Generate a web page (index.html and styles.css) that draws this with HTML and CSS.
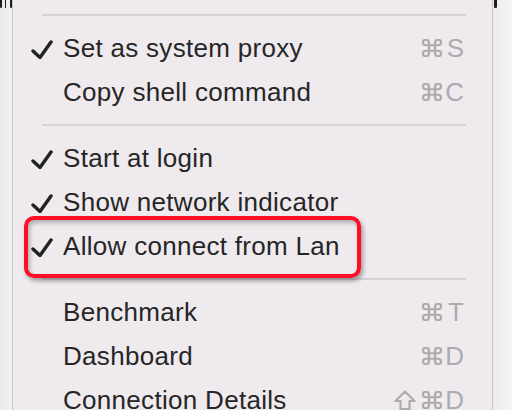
FILE: index.html
```html
<!DOCTYPE html>
<html lang="en">
<head>
<meta charset="utf-8">
<title>Menu</title>
<link rel="stylesheet" href="styles.css">
</head>
<body>
<div class="screen">
  <div class="side side-left"><div class="frag"><span class="bar b1"></span><span class="bar b2"></span><span class="bar b3"></span></div></div>
  <div class="menu">
    <div class="sep"></div>
    <div class="item">
      <span class="check"><svg width="22" height="20" viewBox="0 0 22 20"><path d="M2 12 L9 18.5 L20 3" fill="none" stroke="#222" stroke-width="3.4" stroke-linecap="round" stroke-linejoin="round"/></svg></span>
      <span class="label">Set as system proxy</span>
      <span class="keys"><svg class="cmd" width="20" height="18" viewBox="2.2 2.2 19.6 19.6" preserveAspectRatio="none"><path d="M15 6v12a3 3 0 1 0 3-3H6a3 3 0 1 0 3 3V6a3 3 0 1 0-3 3h12a3 3 0 1 0-3-3z" fill="none" stroke="#aeaaae" stroke-width="2.3"/></svg><span class="key">S</span></span>
    </div>
    <div class="item">
      <span class="check"></span>
      <span class="label">Copy shell command</span>
      <span class="keys"><svg class="cmd" width="20" height="18" viewBox="2.2 2.2 19.6 19.6" preserveAspectRatio="none"><path d="M15 6v12a3 3 0 1 0 3-3H6a3 3 0 1 0 3 3V6a3 3 0 1 0-3 3h12a3 3 0 1 0-3-3z" fill="none" stroke="#aeaaae" stroke-width="2.3"/></svg><span class="key">C</span></span>
    </div>
    <div class="sep"></div>
    <div class="item">
      <span class="check"><svg width="22" height="20" viewBox="0 0 22 20"><path d="M2 12 L9 18.5 L20 3" fill="none" stroke="#222" stroke-width="3.4" stroke-linecap="round" stroke-linejoin="round"/></svg></span>
      <span class="label">Start at login</span>
    </div>
    <div class="item">
      <span class="check"><svg width="22" height="20" viewBox="0 0 22 20"><path d="M2 12 L9 18.5 L20 3" fill="none" stroke="#222" stroke-width="3.4" stroke-linecap="round" stroke-linejoin="round"/></svg></span>
      <span class="label">Show network indicator</span>
    </div>
    <div class="item highlighted">
      <span class="check"><svg width="22" height="20" viewBox="0 0 22 20"><path d="M2 12 L9 18.5 L20 3" fill="none" stroke="#222" stroke-width="3.4" stroke-linecap="round" stroke-linejoin="round"/></svg></span>
      <span class="label">Allow connect from Lan</span>
      <span class="callout"></span>
    </div>
    <div class="sep"></div>
    <div class="item">
      <span class="check"></span>
      <span class="label">Benchmark</span>
      <span class="keys"><svg class="cmd" width="20" height="18" viewBox="2.2 2.2 19.6 19.6" preserveAspectRatio="none"><path d="M15 6v12a3 3 0 1 0 3-3H6a3 3 0 1 0 3 3V6a3 3 0 1 0-3 3h12a3 3 0 1 0-3-3z" fill="none" stroke="#aeaaae" stroke-width="2.3"/></svg><span class="key">T</span></span>
    </div>
    <div class="item">
      <span class="check"></span>
      <span class="label">Dashboard</span>
      <span class="keys"><svg class="cmd" width="20" height="18" viewBox="2.2 2.2 19.6 19.6" preserveAspectRatio="none"><path d="M15 6v12a3 3 0 1 0 3-3H6a3 3 0 1 0 3 3V6a3 3 0 1 0-3 3h12a3 3 0 1 0-3-3z" fill="none" stroke="#aeaaae" stroke-width="2.3"/></svg><span class="key">D</span></span>
    </div>
    <div class="item">
      <span class="check"></span>
      <span class="label">Connection Details</span>
      <span class="keys"><svg class="shift" width="22" height="20" viewBox="0 0 22 20"><path d="M11 1.5 L20.5 11 H15.5 V19 H6.5 V11 H1.5 Z" fill="none" stroke="#aeaaae" stroke-width="2.2" stroke-linejoin="round"/></svg><svg class="cmd" width="20" height="18" viewBox="2.2 2.2 19.6 19.6" preserveAspectRatio="none"><path d="M15 6v12a3 3 0 1 0 3-3H6a3 3 0 1 0 3 3V6a3 3 0 1 0-3 3h12a3 3 0 1 0-3-3z" fill="none" stroke="#aeaaae" stroke-width="2.3"/></svg><span class="key">D</span></span>
    </div>
  </div>
  <div class="side side-right"><div class="frag"><span class="bar b4"></span></div></div>
</div>
</body>
</html>
```

FILE: styles.css
```css
html, body {
  margin: 0;
  padding: 0;
}

body {
  width: 512px;
  height: 410px;
  overflow: hidden;
  background: #f2f2f2;
  font-family: "Liberation Sans", Arial, sans-serif;
}

.screen {
  display: flex;
  height: 410px;
  overflow: hidden;
}

.side {
  flex: none;
}

.side-left {
  width: 12px;
  background: linear-gradient(to right, #e9e9e9, #f3f3f3);
  overflow: hidden;
}

.side-right {
  flex: 1;
  background: linear-gradient(to right, #ececec, #f5f5f5);
  overflow: hidden;
}

.frag {
  height: 8px;
  display: flex;
  align-items: stretch;
}

.bar {
  display: block;
  width: 2px;
  background: #1e1e1e;
  border-radius: 0 0 1px 1px;
}

.b1 { margin-left: 0; }
.b2 { margin-left: 3px; }
.b3 { margin-left: 4px; }
.b4 { margin-left: 1px; width: 3px; }

.menu {
  flex: none;
  width: 479px;
  border-left: 1px solid #c6c3c6;
  border-right: 1px solid #c9c6c9;
  background: #eeeaee;
  padding-top: 4px;
  display: flex;
  flex-direction: column;
}

.sep {
  flex: none;
  height: 2px;
  margin: 10px 26px 10px 29px;
  background: #d6d2d6;
}

.item {
  flex: none;
  height: 44px;
  display: flex;
  align-items: center;
  padding-left: 18px;
  padding-right: 28px;
  font-size: 26px;
  color: #262626;
  position: relative;
}

.check {
  width: 32px;
  flex: none;
  display: flex;
  align-items: center;
  height: 44px;
}

.check svg {
  display: block;
  margin-top: 1px;
}

.label {
  flex: 1;
  white-space: nowrap;
  letter-spacing: 0.3px;
}

.keys {
  display: flex;
  align-items: center;
  color: #aeaaae;
  font-size: 26px;
}

.keys svg {
  display: block;
}

.shift {
  margin-right: 6px;
}

.key {
  width: 22px;
  text-align: right;
}

.callout {
  position: absolute;
  left: 11px;
  top: -8px;
  width: 329px;
  height: 54px;
  border: 4.5px solid #fc0f24;
  border-radius: 10px;
  box-shadow: 2px 3px 4px rgba(0, 0, 0, 0.35), inset 2px 3px 4px rgba(0, 0, 0, 0.25);
  pointer-events: none;
}
```
